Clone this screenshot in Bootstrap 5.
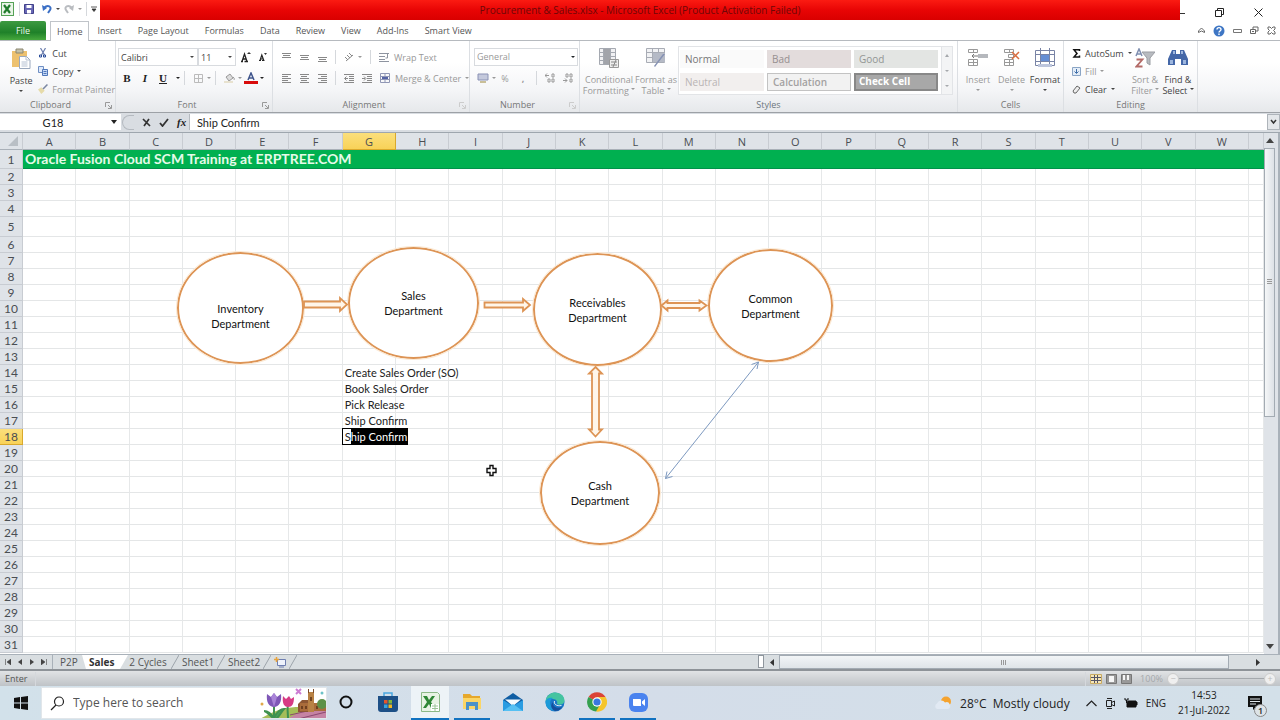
<!DOCTYPE html>
<html lang="en">
<head>
<meta charset="utf-8">
<meta name="viewport" content="width=device-width, initial-scale=1">
<title>Procurement &amp; Sales.xlsx - Microsoft Excel</title>
<link href="https://cdn.jsdelivr.net/npm/bootstrap@5.3.0/dist/css/bootstrap.min.css" rel="stylesheet">
<style>
  body { font-family: "Open Sans", "Noto Sans", sans-serif; font-size: 9px; line-height: 12px; color: #444; background: #fff; overflow-x: hidden; }
  button, input, select { font: inherit; color: inherit; }
  svg { display: block; flex: none; }
  .tool { border: 0; background: none; padding: 0; line-height: 11px; display: flex; align-items: center; justify-content: center; white-space: nowrap; }
  .dim { color: #999; }
  .caret { display: inline-block; width: 0; height: 0; border: 2px solid transparent; border-top-color: currentColor; border-bottom: 0; flex: none; }
  .vsep { width: 1px; height: 14px; background: #d5d8dc; flex: none; }

  .titlebar { height: 21px; }
  .quick { width: 100px; height: 18px; }
  .red-title { background: linear-gradient(#fb1b12, #e80505 50%, #d90000); color: #6e0707; height: 20px; line-height: 21px; font-size: 10px; }
  .win-buttons { width: 100px; gap: 30px; }
  .menu-tabs { height: 20px; border-bottom: 1px solid #b6babf; }
  .menu-tabs a { color: #555; text-decoration: none; padding: 0 8px; height: 19px; line-height: 19px; }
  .menu-tabs .file-tab { background: linear-gradient(#3d9a41, #1f8129 60%, #46a83c); color: #e9f6e9; width: 46px; text-align: center; margin-right: 4px; border-radius: 2px 2px 0 0; }
  .menu-tabs .open-tab { border: 1px solid #c0c4c9; border-bottom: 0; height: 20px; background: #fff; padding: 0 6px; }
  .menu-right { gap: 8px; }

  .ribbon { height: 72px; background: linear-gradient(#fff 30%, #f4f5f7 70%, #e6e8eb); border-bottom: 1px solid #9da1a6; }
  .group { border-right: 1px solid #dcdfe3; padding-top: 3px; flex: none; }
  .group-body { height: 54px; }
  .group-name { height: 14px; line-height: 14px; text-align: center; color: #777; position: relative; }
  .group-name.launch { padding-right: 14px; }
  .group-name svg { position: absolute; right: 3px; top: 4px; }
  .g-clip { width: 116px; } .g-font { width: 157px; } .g-align { width: 197px; } .g-num { width: 110px; }
  .g-style { width: 378px; } .g-cells { width: 106px; } .g-edit { width: 134px; }
  .g-font .group-body { padding: 4px 2px; }
  .trow { height: 24px; display: flex; align-items: center; }
  .brow { height: 18px; display: flex; align-items: center; gap: 4px; }
  .b18 { width: 18px; height: 18px; flex: none; }
  .serif-row { font-family: "Liberation Serif", serif; font-size: 11px; color: #222; }
  .big { flex-direction: column; justify-content: flex-start; padding-top: 4px; height: 54px; }
  .big svg { margin-bottom: 6px; }
  .big .short-icon { margin-bottom: 8px; }
  .combo { height: 18px; border: 1px solid #d8dbdf; background: #fff; padding: 0 2px; appearance: none; border-radius: 0; line-height: 14px; }
  .c-font { width: 80px; } .c-size { width: 38px; } .c-num { width: 104px; }
  .combo-box { position: relative; display: flex; flex: none; }
  .combo-box .caret { position: absolute; right: 4px; top: 8px; pointer-events: none; }
  .gallery { border: 1px solid #e2e4e7; height: 49px; width: 275px; margin-top: 2px; background: #fff; }
  .swatches { display: grid; grid-template-columns: 84px 84px 84px; gap: 4px 3px; padding: 3px 1px; flex: 1; }
  .swatch { border: 0; text-align: left; padding: 0 5px; font-size: 10px; line-height: 16px; color: #a3a1a1; background: #fafafa; height: 18px; }
  .s-normal { color: #777; } .s-bad { background: #e3dcdc; color: #968f90; } .s-good { background: #e3e5e3; color: #929693; }
  .s-neutral { background: #f2efee; color: #b9b4b4; } .s-calc { background: #f2f2f2; border: 1px solid #c3c3c3; font-weight: 600; line-height: 14px; }
  .s-check { background: #a8a8a8; border: 2px solid #888; color: #fff; font-weight: 700; line-height: 13px; padding-left: 3px; }
  .gal-scroll { width: 11px; background: #f3f4f5; border-left: 1px solid #e2e4e7; color: #a5a8ac; }

  .formula { height: 20px; background: #d9dde2; border-bottom: 1px solid #9ea6ae; padding-top: 1px; font-family: Lato, sans-serif; font-size: 11px; color: #222; }
  .formula input { border: 0; height: 16px; padding: 0; background: #fff; }
  .name-box { width: 106px; text-align: center; }
  .name-drop { width: 15px; height: 16px; background: #fff; }
  .name-drop .caret { border-width: 4px 3px 0; }
  .fx-tools { width: 68px; height: 16px; background: #d9dde2; }
  .fx-pill { width: 12px; height: 15px; border: 1px solid #b5bac0; border-right: 0; border-radius: 8px 0 0 8px; margin-left: 1px; }
  .formula .fx-text { padding-left: 7px; border-left: 1px solid #b5bac0; min-width: 0; }
  .fx-more { width: 13px; height: 16px; border: 1px solid #aeb4ba; background: #e4e7ea; }

  .sheet-wrap { position: relative; min-width: 0; }
  .cells { table-layout: fixed; width: 100%; border-collapse: separate; border-spacing: 0; font-family: Lato, sans-serif; font-size: 11px; line-height: 15px; color: #222; }
  .cells th, .cells td { padding: 0; height: 16px; }
  .cells td { border-right: 1px solid #e6e8e9; border-bottom: 1px solid #e4e6e7; white-space: nowrap; padding-left: 2px; overflow: visible; }
  .cells th { background: #dfe3e8; color: #4a4e53; font-weight: 400; text-align: center; border-bottom: 1px solid #c8ccd2; border-right: 1px solid #c8ccd2; font-family: "Open Sans", sans-serif; font-size: 11px; }
  .cells thead th { height: 17px; border-bottom-color: #a9b0b8; }
  .cells .rowhead { width: 23px; } .cells .edge { width: 15px; }
  .cells tbody th { font-family: Lato, sans-serif; font-size: 12px; }
  .cells th.picked { background: linear-gradient(#fbdf7c, #f8d258); border-color: #d9a92c; }
  .cells .banner td { height: 19px; background: #00b050; border-right: 0; border-bottom-color: #00924a; color: #e6fbe9; font-weight: 700; font-size: 14px; line-height: 18px; }
  .cells .tall > * { height: 20px; }
  .cells td.editing { padding-left: 0; }
  .edit-box { position: relative; height: 17px; width: max-content; margin: -1px 0 -1px -1px; border: 1px solid #000; padding-left: 2px; line-height: 15px; }
  .edit-box span { display: inline-block; height: 15px; background: #000; color: #fff; }

  .node { position: absolute; border: 2px solid #dd9455; outline: 1px solid #fbe9d4; border-radius: 50%; background: #fff; font-family: Lato, sans-serif; font-size: 11px; line-height: 15px; color: #111; text-align: center; white-space: pre-line; display: flex; align-items: center; justify-content: center; }
  .node-low { padding-top: 16px; }
  .wires { position: absolute; left: 0; top: 0; pointer-events: none; }

  .vbar { flex: 0 0 16px; background: #dfe3e8; padding-right: 3px; border-right: 2px solid #a9b1b9; }
  .bar-thumb { border: 1px solid #a3abb3; background: linear-gradient(90deg, #f5f7f8, #dde1e6); }
  .vbar .bar-thumb { flex: 269 1 0; } .vbar .rest { flex: 224 1 0; }
  .vbar .tool { height: 15px; }

  .sheet-bar { height: 17px; background: #d9dee1; border-top: 1px solid #a9b1b9; border-bottom: 2px solid #8e9398; font-size: 10px; }
  .sheet-bar .nav-btn { width: 12px; height: 14px; }
  .sheet-bar .nav-btn:first-child { margin-left: 2px; }
  .sheet-bar a { color: #555; text-decoration: none; height: 14px; line-height: 14px; }
  .sheet-bar .first-tab { border-left: 1px solid #a9b1b9; padding: 0 6px 0 7px; width: 30px; margin-left: 2px; }
  .sheet-bar .on-tab { background: #fff; font-weight: 700; color: #333; width: 46px; padding-left: 7px; clip-path: polygon(0 0, 100% 0, 38px 100%, 4px 100%); }
  .sheet-bar .w-cyc { width: 40px; } .sheet-bar .w-sh { width: 32px; }
  .slash { margin: 0 3px; }
  .split { width: 6px; height: 13px; border: 1px solid #8f969d; background: #fff; }
  .hscroll { flex: 0 0 522px; }
  .scroll-left { width: 15px; } .scroll-right { width: 51px; padding-left: 6px !important; }
  .hscroll .bar-thumb { height: 14px; flex: 1; background: linear-gradient(#f2f5f7, #dfe4e8); }

  .statusbar { height: 15px; background: linear-gradient(#e1e3e5, #bfc3c7); color: #555; padding-left: 5px; }
  .percent { color: #a5a8ab; }
  .zoom-line { width: 85px; height: 12px; appearance: none; background: linear-gradient(#a5a9ad, #a5a9ad) center/100% 1px no-repeat; margin: 0; }
  .zoom-line::-webkit-slider-thumb { appearance: none; width: 1px; height: 1px; background: #a5a9ad; }
  .round { width: 12px; height: 12px; border-radius: 50%; background: #efefef; border: 1px solid #ccc; color: #bbb; }

  .taskbar { background: linear-gradient(90deg, #d2e1ea, #d4dde9 50%, #d3e0e9); min-height: 34px; color: #222; font-size: 12px; line-height: 16px; }
  .start { width: 41px; }
  .search { width: 286px; height: 32px; background: #fff; border: 1px solid #e1e6ea; padding-left: 8px; }
  .search input { border: 0; outline: 0; background: none; width: 186px; padding: 0; }
  .search input::placeholder { color: #555; opacity: 1; }
  .task { width: 38px; height: 34px; border: 0; background: none; padding: 0; display: flex; align-items: center; justify-content: center; border-bottom: 2px solid transparent; margin-right: 4px; }
  .task.run { border-bottom-color: #1172c0; width: 36px; margin-left: 1px; }
  .task.front { background: #edf3f7; width: 38px; margin-left: 0; }
  .tray { font-size: 10px; line-height: 15px; }
  .tray .weather { font-size: 12px; }
  .clock { width: 60px; text-align: center; }
  .note { position: relative; width: 26px; height: 26px; }
  .note b { position: absolute; right: 1px; bottom: -1px; width: 13px; height: 13px; border-radius: 50%; border: 1px solid #888; background: #dde3e7; font-size: 9px; line-height: 11px; font-weight: 600; text-align: center; }
</style>
</head>
<body>
<div class="d-flex flex-column min-vh-100">

  <header>
    <div class="titlebar d-flex align-items-start">
      <div class="quick d-flex align-items-center">
        <svg width="15" height="14" viewBox="0 0 15 14"><rect x="1.500" y=".5" width="12" height="13" fill="#e9f4e7" stroke="#55a257"/><path d="M4 3l6 8M10 3l-6 8" stroke="#207b2b" stroke-width="2.200"/></svg>
        <span class="vsep ms-1 me-1"></span>
        <button class="tool" aria-label="Save"><svg width="10" height="10" viewBox="0 0 10 10"><path d="M.5.5h9v9h-9z" fill="#6968b5" stroke="#41418b"/><path d="M2.500 1h5v3h-5zM3 6h4v3.500H3z" fill="#fff"/></svg></button>
        <button class="tool ms-2" aria-label="Undo"><svg width="10" height="10" viewBox="0 0 10 10"><path d="M2 4c4-4 8-1 6 2L6 9" fill="none" stroke="#3b6fc5" stroke-width="2"/><path d="M0 1l1 6 4-3z" fill="#3b6fc5"/></svg></button>
        <button class="tool ms-1" aria-label="Undo list"><i class="caret"></i></button>
        <button class="tool ms-1 dim" aria-label="Redo"><svg width="10" height="10" viewBox="0 0 10 10"><path d="M8 4C4 0 0 3 2 6l2 3" fill="none" stroke="#b9bcc0" stroke-width="2"/><path d="M10 1L9 7 5 4z" fill="#b9bcc0"/></svg></button>
        <button class="tool ms-1 dim" aria-label="Redo list"><i class="caret"></i></button>
        <span class="vsep ms-1"></span>
        <button class="tool ms-1" aria-label="Customize"><svg width="6" height="6" viewBox="0 0 6 6"><path d="M0 1h6M1 3h4L3 5.500z" stroke="#333" fill="#333" stroke-width=".8"/></svg></button>
      </div>
      <div class="red-title flex-grow-1 text-center">Procurement &amp; Sales.xlsx - Microsoft Excel (Product Activation Failed)</div>
      <div class="win-buttons d-flex align-items-center h-100 pe-3 pt-1">
        <button class="tool" aria-label="Minimize"><svg width="5" height="10"><path d="M0 5.500h5" stroke="#333"/></svg></button>
        <button class="tool" aria-label="Restore"><svg width="9" height="9" viewBox="0 0 9 9"><path d="M.5 2.500h6v6h-6zM2.500 2V.5h6v6H7" fill="none" stroke="#222"/></svg></button>
        <button class="tool" aria-label="Close"><svg width="9" height="9" viewBox="0 0 9 9"><path d="M.5.5l8 8M8.500.5l-8 8" stroke="#222"/></svg></button>
      </div>
    </div>

    <nav class="menu-tabs d-flex">
      <a href="#" class="file-tab">File</a><a href="#" class="open-tab">Home</a><a href="#">Insert</a><a href="#">Page Layout</a><a href="#">Formulas</a><a href="#">Data</a><a href="#">Review</a><a href="#">View</a><a href="#">Add-Ins</a><a href="#">Smart View</a>
      <div class="menu-right ms-auto d-flex align-items-center pe-1">
        <button class="tool" aria-label="Collapse ribbon"><svg width="7" height="7" viewBox="0 0 7 7"><path d="M.5 4L3.500 1l3 3v1.500L3.500 4 .5 5.500z" fill="none" stroke="#666"/></svg></button>
        <button class="tool" aria-label="Help"><svg width="12" height="12" viewBox="0 0 12 12"><circle cx="6" cy="6" r="5.500" fill="#3e76c4"/><path d="M4 4.500c0-2.500 4-2.500 4 0C8 6 6 6 6 7.500M6 8.500V10" stroke="#fff" fill="none" stroke-width="1.400"/></svg></button>
        <button class="tool" aria-label="Minimize workbook"><svg width="9" height="9"><path d="M.5 3.500h8v3h-8z" fill="none" stroke="#777"/></svg></button>
        <button class="tool" aria-label="Restore workbook"><svg width="9" height="9" viewBox="0 0 9 9"><path d="M.5 3.500h5v4h-5zM3 3V1h5v4H6M2 5.500h2" fill="none" stroke="#666"/></svg></button>
        <button class="tool" aria-label="Close workbook"><svg width="9" height="9" viewBox="0 0 9 9"><path d="M1 1h2l1.500 1.500L6 1h2v2L6.500 4.500 8 6v2H6L4.500 6.500 3 8H1V6l1.500-1.500L1 3z" fill="none" stroke="#666"/></svg></button>
      </div>
    </nav>

    <div class="ribbon d-flex">
      <section class="group g-clip">
        <div class="group-body d-flex">
          <button class="tool big ps-1 col-4"><svg width="20" height="21" viewBox="0 0 20 21"><path d="M1 3h15v16H1z" fill="#edc16f"/><path d="M5 1h7v4H5z" fill="#c5c1a8" stroke="#8b8770"/><path d="M8.500 8.500h7l3.500 3.500v8.500H8.500z" fill="#fff" stroke="#9aa8bd"/><path d="M15 8.500V12h4M10.500 14h6M10.500 16h6M10.500 18h6" fill="none" stroke="#b5c1d2"/></svg>Paste<i class="caret mt-1"></i></button>
          <div>
            <button class="tool brow"><svg width="10" height="10" viewBox="0 0 9 10"><path d="M2 0l4 7M7 0L3 7" stroke="#6c7eae" stroke-width="1.200"/><path d="M1 7h2v2H1zM5 7h2v2H5z" fill="none" stroke="#2a4c9a"/></svg>Cut</button>
            <button class="tool brow"><svg width="10" height="10" viewBox="0 0 10 10"><path d="M.5.5h5v6h-5z" fill="#dfeafb" stroke="#6f8fc4"/><path d="M4.500 3.500h5v6h-5z" fill="#c7daf7" stroke="#4f76b8"/><path d="M5.500 5.500h3M5.500 7.500h3" stroke="#4f76b8"/></svg>Copy<i class="caret"></i></button>
            <button class="tool brow dim"><svg width="10" height="10" viewBox="0 0 9 9"><path d="M0 5l3-2 3 3-3 3z" fill="#e6dba9"/><path d="M4 4l4-4 1 1-4 4z" fill="#7b87a2"/></svg>Format Painter</button>
          </div>
        </div>
        <div class="group-name launch">Clipboard<svg width="7" height="7"><path d="M.5 5V.5H5M3 3l3 3M6.500 3v3.500H3" stroke="#999" fill="none"/></svg></div>
      </section>

      <section class="group g-font">
        <div class="group-body">
          <div class="d-flex align-items-center">
            <label class="combo-box"><input class="combo c-font" value="Calibri" aria-label="Font"><i class="caret"></i></label>
            <label class="combo-box"><input class="combo c-size" value="11" aria-label="Font size"><i class="caret"></i></label>
            <button class="tool b18" aria-label="Grow font"><svg width="11" height="12" viewBox="0 0 11 12"><path d="M1 10.500h2M4.500 10.500H8M2 10.500L4.500 3 7 10.500M3 8h3" fill="none" stroke="#222" stroke-width="1.300"/><path d="M7 3l2-2 2 2z" fill="#333"/></svg></button>
            <button class="tool b18" aria-label="Shrink font"><svg width="10" height="10" viewBox="0 0 10 10"><path d="M1 8.500h2M4 8.500h2.500M2 8.500L3.800 3l2 5.500M2.600 7h2.400" fill="none" stroke="#222" stroke-width="1.200"/><path d="M6 1h3L7.500 3z" fill="#333"/></svg></button>
          </div>
          <div class="trow serif-row">
            <button class="tool b18 fw-bold">B</button><button class="tool b18 fst-italic fw-bold">I</button><button class="tool b18 fw-bold text-decoration-underline">U</button>
            <button class="tool ms-1" aria-label="Underline list"><i class="caret"></i></button><span class="vsep mx-1"></span>
            <button class="tool b18" aria-label="Borders"><svg width="9" height="9"><path d="M.5.5h8v8h-8zM4.500 0v9M0 4.500h9" stroke="#bbb" fill="none"/></svg></button><button class="tool dim" aria-label="Border list"><i class="caret"></i></button><span class="vsep mx-1"></span>
            <button class="tool b18" aria-label="Fill color"><svg width="11" height="10" viewBox="0 0 11 10"><path d="M2 4l4-3 3 4-4 3z" fill="#ddd" stroke="#999"/><path d="M9 4c2 1 1 3 1 3" stroke="#999" fill="none"/><path d="M0 9h9" stroke="#e8e2cf" stroke-width="2"/></svg></button><button class="tool dim" aria-label="Fill list"><i class="caret"></i></button>
            <button class="tool b18" aria-label="Font color"><svg width="14" height="12" viewBox="0 0 14 12"><path d="M4 8l3-7 3 7M5 6h4" fill="none" stroke="#3f558c" stroke-width="1.500"/><path d="M0 9h14v3H0z" fill="#d80b0b"/></svg></button><button class="tool" aria-label="Font color list"><i class="caret"></i></button>
          </div>
        </div>
        <div class="group-name launch">Font<svg width="7" height="7"><path d="M.5 5V.5H5M3 3l3 3M6.500 3v3.500H3" stroke="#999" fill="none"/></svg></div>
      </section>

      <section class="group g-align dim">
        <div class="group-body pt-1 ps-1">
          <div class="d-flex align-items-center">
            <button class="tool b18" aria-label="Top align"><svg width="9" height="9"><path d="M0 .5h9M1 2.500h7M0 4.500h9" stroke="#888"/></svg></button>
            <button class="tool b18" aria-label="Middle align"><svg width="9" height="9"><path d="M0 2.500h9M1 4.500h7M0 6.500h9" stroke="#888"/></svg></button>
            <button class="tool b18" aria-label="Bottom align"><svg width="9" height="9"><path d="M0 4.500h9M1 6.500h7M0 8.500h9" stroke="#888"/></svg></button>
            <span class="vsep mx-1"></span>
            <button class="tool b18" aria-label="Orientation"><svg width="10" height="10"><path d="M1 5l3 3M3 3l3 3M5 1l3 3M2 9l7-6" stroke="#888"/></svg></button><i class="caret"></i>
            <span class="vsep mx-2"></span>
            <button class="tool gap-1"><svg width="11" height="10"><path d="M0 1.500h10M0 4.500h6M0 7.500h6M8.500 2v4h-2M0 9.500h10" stroke="#8e94a0" fill="none"/></svg>Wrap Text</button>
          </div>
          <div class="trow">
            <button class="tool b18" aria-label="Align left"><svg width="9" height="9"><path d="M0 .5h9M0 2.500h6M0 4.500h9M0 6.500h6M0 8.500h9" stroke="#888"/></svg></button>
            <button class="tool b18" aria-label="Center"><svg width="9" height="9"><path d="M0 .5h9M1 2.500h6M0 4.500h9M1 6.500h6M0 8.500h9" stroke="#888"/></svg></button>
            <button class="tool b18" aria-label="Align right"><svg width="9" height="9"><path d="M0 .5h9M3 2.500h6M0 4.500h9M3 6.500h6M0 8.500h9" stroke="#888"/></svg></button>
            <span class="vsep mx-1"></span>
            <button class="tool b18" aria-label="Decrease indent"><svg width="10" height="9"><path d="M0 .5h10M5 2.500h5M5 4.500h5M5 6.500h5M0 8.500h10M4 4.500H1M2.500 2.500l-2 2 2 2" stroke="#888" fill="none"/></svg></button>
            <button class="tool b18" aria-label="Increase indent"><svg width="10" height="9"><path d="M0 .5h10M5 2.500h5M5 4.500h5M5 6.500h5M0 8.500h10M0 4.500h3M2 2.500l2 2-2 2" stroke="#888" fill="none"/></svg></button>
            <button class="tool gap-1 ms-1"><svg width="11" height="10"><path d="M.5.5h9v9h-9zM0 3.500h10M0 6.500h10M5 0v3M5 7v3" stroke="#9097b5" fill="none"/><path d="M2 5h6" stroke="#5563a5" stroke-width="2"/></svg>Merge &amp; Center<i class="caret"></i></button>
          </div>
        </div>
        <div class="group-name launch">Alignment<svg width="7" height="7"><path d="M.5 5V.5H5M3 3l3 3M6.500 3v3.500H3" stroke="#ccc" fill="none"/></svg></div>
      </section>

      <section class="group g-num dim">
        <div class="group-body pt-1 ps-1">
          <label class="combo-box"><select class="combo c-num dim" aria-label="Number format"><option>General</option></select><i class="caret text-dark"></i></label>
          <div class="trow">
            <button class="tool b18" aria-label="Accounting"><svg width="12" height="11"><path d="M1 1h10v6H1z" fill="#c4c9dc" stroke="#8a92b5"/><path d="M3 9h6" stroke="#c9bf98" stroke-width="2"/></svg></button><i class="caret"></i>
            <button class="tool b18">%</button><button class="tool b18 fw-bold">,</button><span class="vsep mx-1"></span>
            <button class="tool b18" aria-label="Increase decimal"><svg width="11" height="10"><path d="M0 2.500h4M2 .5l-2 2 2 2M7 1h2v3H7zM3 6h2v3H3zM7 6h2v3H7z" stroke="#999" fill="none"/></svg></button>
            <button class="tool b18" aria-label="Decrease decimal"><svg width="11" height="10"><path d="M3 1h2v3H3zM7 1h2v3H7zM7 6h2v3H7zM0 7.500h4M2 5.500l2 2-2 2" stroke="#999" fill="none"/></svg></button>
          </div>
        </div>
        <div class="group-name launch">Number<svg width="7" height="7"><path d="M.5 5V.5H5M3 3l3 3M6.500 3v3.500H3" stroke="#ccc" fill="none"/></svg></div>
      </section>

      <section class="group g-style dim">
        <div class="group-body d-flex ps-1">
          <button class="tool big" style="width:50px"><svg width="20" height="20" viewBox="0 0 20 20"><path d="M.5.5h16v16H.5zM0 4.500h17M0 8.500h17M0 12.500h17M4.500 0v17M11.500 0v17" fill="#f1f1f3" stroke="#a5a9b1"/><path d="M5 1h6v15H5z" fill="#a2a4aa"/><path d="M10.500 11.500h9v8h-9z" fill="#eee" stroke="#999"/><path d="M12 14h6M12 17h6M14 19l3-7" stroke="#888"/></svg><span>Conditional<br>Formatting <i class="caret mb-1"></i></span></button>
          <button class="tool big" style="width:44px"><svg width="20" height="20" viewBox="0 0 20 20"><path d="M.5.5h18v14H.5zM0 4.500h18M0 9.500h18M6.500 0v15M12.500 0v15" fill="#f1f2f4" stroke="#a8acb5"/><path d="M7 5h12v9H7z" fill="#b5bac6"/><path d="M19 6l-7 9-3 4-1-1 9-12z" fill="#8591b3"/></svg><span>Format as<br>Table <i class="caret mb-1"></i></span></button>
          <div class="gallery d-flex">
            <div class="swatches">
              <button class="swatch s-normal">Normal</button><button class="swatch s-bad">Bad</button><button class="swatch s-good">Good</button>
              <button class="swatch s-neutral">Neutral</button><button class="swatch s-calc">Calculation</button><button class="swatch s-check">Check Cell</button>
            </div>
            <div class="gal-scroll d-flex flex-column align-items-center justify-content-around"><svg width="4" height="3"><path d="M0 3h4L2 0z" fill="#a5a8ac"/></svg><i class="caret"></i><i class="caret"></i></div>
          </div>
        </div>
        <div class="group-name text-secondary">Styles</div>
      </section>

      <section class="group g-cells">
        <div class="group-body d-flex ps-1">
          <button class="tool big dim" style="width:32px"><svg width="20" height="20" viewBox="0 0 20 20"><path d="M.5 1.500h9v3h-9zM.5 11.500h9v6h-9zM0 14.500h9M5.500 2v3M5.500 12v5" fill="#fff" stroke="#999"/><path d="M10 6h10v4H10z" fill="#b5b8bd"/><path d="M4 8h6M6 6L4 8l2 2" fill="none" stroke="#777"/></svg>Insert<i class="caret mt-1"></i></button>
          <button class="tool big dim" style="width:35px"><svg width="20" height="20" viewBox="0 0 20 20"><path d="M2.500 1.500h9v3h-9zM6.500 6.500h5v3h-5zM2.500 11.500h9v6h-9zM2 14.500h9M7.500 2v3M7.500 12v5" fill="#fff" stroke="#999"/><path d="M10 4l7 7M17 4l-7 7" stroke="#d96c3f" stroke-width="1.500"/></svg>Delete<i class="caret mt-1"></i></button>
          <button class="tool big" style="width:32px"><svg width="21" height="20" viewBox="0 0 21 20"><path d="M.5 2.500h19v15H.5zM0 6.500h20M0 13.500h20M5.500 0v18M14.500 0v18" fill="#fff" stroke="#7883a5"/><path d="M6 7h8v6H6z" fill="#658ed4"/><path d="M3 16h14v3H3z" fill="#bcc5dc"/></svg>Format<i class="caret mt-1"></i></button>
        </div>
        <div class="group-name">Cells</div>
      </section>

      <section class="group g-edit">
        <div class="group-body d-flex ps-2">
          <div style="width:57px">
            <button class="tool brow"><svg width="9" height="9"><path d="M7.500 2V.8H2L5 4.500 2 8H7.500V6.500" stroke="#111" stroke-width="1.500" fill="none"/></svg>AutoSum<i class="caret"></i></button>
            <button class="tool brow dim"><svg width="9" height="9"><path d="M.5.5h8v8h-8z" fill="#e4edf7" stroke="#8aa5c5"/><path d="M4.500 2v4M2.500 4.500l2 2 2-2" stroke="#3f6ea8" fill="none"/></svg>Fill<i class="caret"></i></button>
            <button class="tool brow"><svg width="9" height="9"><path d="M1 6l4-5 3 2-4 5H2z" fill="#eee" stroke="#666"/></svg>Clear<i class="caret"></i></button>
          </div>
          <button class="tool big dim" style="width:32px"><svg width="20" height="20" viewBox="0 0 20 20"><path d="M1 8l3-7 3 7M2 6h4" fill="none" stroke="#7e8eb0" stroke-width="1.500"/><path d="M1.500 11.500h6l-6 7h6" fill="none" stroke="#b36a67" stroke-width="1.800"/><path d="M7 4h13l-5 6v7l-3-2v-5z" fill="#b8bbc0" stroke="#9a9da3"/></svg><span>Sort &amp;<br>Filter <i class="caret mb-1"></i></span></button>
          <button class="tool big" style="width:34px"><svg class="short-icon" width="20" height="18" viewBox="0 0 20 18"><path d="M4 2h4v4h4V2h4l4 9v6h-7v-6H7v6H0v-6z" fill="#4467a8"/><path d="M2 12h3v4H2zM15 12h3v4h-3zM5 3h2v3H5zM13 3h2v3h-2z" fill="#9db6de"/></svg><span>Find &amp;<br>Select <i class="caret mb-1"></i></span></button>
        </div>
        <div class="group-name">Editing</div>
      </section>
    </div>

    <div class="formula d-flex">
      <input class="name-box" value="G18" aria-label="Name box">
      <button class="tool name-drop" aria-label="Names"><i class="caret"></i></button>
      <div class="fx-tools d-flex align-items-center">
        <span class="fx-pill"></span>
        <button class="tool ms-2" aria-label="Cancel"><svg width="9" height="9"><path d="M1 1l7 7M7 1L2 8" stroke="#333" stroke-width="1.700"/></svg></button>
        <button class="tool ms-2" aria-label="Enter"><svg width="10" height="9"><path d="M1 5l2.500 3L9 1" fill="none" stroke="#333" stroke-width="1.800"/></svg></button>
        <button class="tool serif-row ms-2 fst-italic fw-bold">fx</button>
      </div>
      <input class="fx-text flex-grow-1" value="Ship Confirm" aria-label="Formula">
      <button class="tool fx-more" aria-label="Expand formula bar"><svg width="7" height="6"><path d="M1 1l2.500 3L6 1" fill="none" stroke="#333" stroke-width="1.500"/></svg></button>
    </div>
  </header>

  <main class="d-flex flex-grow-1">
    <div class="sheet-wrap flex-grow-1" id="sheet">
      <table class="cells"><thead id="head"></thead><tbody id="rows"></tbody></table>
      <svg class="wires" width="1264" height="522" viewBox="0 133 1264 522">
        <g fill="#fff6ea" stroke="#dd9455" stroke-width="1.800">
          <path d="M304 301.500h36V298l7 6.500-7 6.500v-3.500h-36z"/>
          <path d="M484.500 302.500h38.500V299l7 6-7 6v-3.500h-38.500z"/>
          <path d="M661.500 305.500l6-5v2.500h32v-2.500l7 5-7 5V308h-32v2.500z"/>
          <path d="M595.500 367l6.500 6.500h-3v56h3l-6.500 7-6.500-7h3v-56h-3z"/>
        </g>
        <path d="M758.500 362L665.500 478.500M758.500 362l-1.500 7M758.500 362l-7 2.500M665.500 478.500l1.500-7M665.500 478.500l7-2" stroke="#7d99c0" fill="none"/>
        <path d="M490 465.500h3v3h3v4h-3v3h-3v-3h-3v-4h3z" fill="#fff" stroke="#111" stroke-width="1.400"/>
      </svg>
    </div>
    <div class="vbar d-flex flex-column">
      <button class="tool" aria-label="Scroll up"><svg width="8" height="5"><path d="M0 5h8L4 0z" fill="#444"/></svg></button>
      <div class="bar-thumb d-flex align-items-center justify-content-center"><svg width="5" height="6"><path d="M0 .5h5M0 2.500h5M0 4.500h5" stroke="#999"/></svg></div>
      <div class="rest"></div>
      <button class="tool" aria-label="Scroll down"><svg width="8" height="5"><path d="M0 0h8L4 5z" fill="#444"/></svg></button>
    </div>
  </main>

  <footer>
    <div class="sheet-bar d-flex">
      <button class="tool nav-btn" aria-label="First sheet"><svg width="6" height="6"><path d="M.5 0v6M6 0v6L2 3z" fill="#444" stroke="#444" stroke-width=".6"/></svg></button>
      <button class="tool nav-btn" aria-label="Previous sheet"><svg width="4" height="6"><path d="M4 0v6L0 3z" fill="#444"/></svg></button>
      <button class="tool nav-btn" aria-label="Next sheet"><svg width="4" height="6"><path d="M0 0v6l4-3z" fill="#444"/></svg></button>
      <button class="tool nav-btn" aria-label="Last sheet"><svg width="6" height="6"><path d="M5.500 0v6M0 0v6l4-3z" fill="#444" stroke="#444" stroke-width=".6"/></svg></button>
      <a href="#" class="first-tab">P2P</a>
      <a href="#" class="on-tab">Sales</a>
      <a href="#" class="w-cyc text-center">2 Cycles</a><svg class="slash" width="8" height="14"><path d="M0 14L8 0" stroke="#9da4ab"/></svg>
      <a href="#" class="w-sh text-center">Sheet1</a><svg class="slash" width="8" height="14"><path d="M0 14L8 0" stroke="#9da4ab"/></svg>
      <a href="#" class="w-sh text-center">Sheet2</a><svg class="slash" width="8" height="14"><path d="M0 14L8 0" stroke="#9da4ab"/></svg>
      <button class="tool" aria-label="Insert sheet"><svg width="12" height="11"><path d="M3.500 2.500h8v6h-8z" fill="#eef2fb" stroke="#6f7fb0"/><path d="M5 10h5" stroke="#6f7fb0"/><path d="M2.500 0v5M0 2.500h5" stroke="#e8a33c" stroke-width="1.500"/></svg></button><svg class="slash" width="8" height="14"><path d="M0 14L8 0" stroke="#9da4ab"/></svg>
      <div class="hscroll d-flex ms-auto">
        <span class="split"></span>
        <button class="tool scroll-left" aria-label="Scroll left"><svg width="4" height="7"><path d="M4 0v7L0 3.500z" fill="#333"/></svg></button>
        <div class="bar-thumb d-flex align-items-center justify-content-center"><svg width="6" height="5"><path d="M.5 0v5M2.500 0v5M4.500 0v5" stroke="#999"/></svg></div>
        <button class="tool scroll-right" aria-label="Scroll right"><svg width="4" height="7"><path d="M0 0v7l4-3.500z" fill="#333"/></svg></button>
      </div>
    </div>

    <div class="statusbar d-flex align-items-center">
      <span>Enter</span><span class="vsep ms-2"></span>
      <div class="ms-auto me-1 d-flex align-items-center">
        <span class="vsep me-1"></span>
        <button class="tool me-1" aria-label="Normal view"><svg width="12" height="10"><path d="M.5.5h11v9H.5z" fill="#f6e6b8" stroke="#c9ab62"/><path d="M1 3.500h10M1 6.500h10M4.500 1v8M7.500 1v8" stroke="#556"/></svg></button>
        <button class="tool me-1" aria-label="Page layout view"><svg width="11" height="10"><path d="M.5.5h10v9H.5z" fill="#999" stroke="#777"/><path d="M3 2h5v6H3z" fill="#f6f6f6"/></svg></button>
        <button class="tool me-2" aria-label="Page break view"><svg width="11" height="10"><path d="M.5.5h10v9H.5z" fill="#999" stroke="#777"/><path d="M2 1h2v5H2zM6 1h2v5H6z" fill="#f6f6f6"/></svg></button>
        <span class="percent me-1">100%</span>
        <button class="tool round" aria-label="Zoom out">−</button>
        <input type="range" class="zoom-line" aria-label="Zoom">
        <button class="tool round" aria-label="Zoom in">+</button>
      </div>
    </div>

    <div class="taskbar d-flex align-items-center">
      <button class="tool start" aria-label="Start"><svg width="14" height="14" viewBox="0 0 14 14"><path d="M0 2l6-1v5.500H0zM7 1l7-1v6.500H7zM0 7.500h6V13l-6-1zM7 7.500h7V14l-7-1z" fill="#111"/></svg></button>
      <label class="search d-flex align-items-center overflow-hidden">
        <svg width="15" height="15" viewBox="0 0 15 15"><circle cx="9" cy="5.500" r="4.500" fill="none" stroke="#222" stroke-width="1.200"/><path d="M6 9l-5 5" stroke="#222" stroke-width="1.300"/></svg>
        <input class="ms-2" type="text" placeholder="Type here to search">
        <svg class="ms-auto" width="66" height="32" viewBox="0 0 66 32"><path d="M0 32c16-10 28-12 40-12h26v12z" fill="#a5bd58"/><path d="M28 32c10-8 24-10 38-9v9z" fill="#c583a4"/><path d="M38 32l28-7M30 28l26-6" stroke="#8b4970"/><path d="M38 17l4-4h7v12H38z" fill="#8d5632"/><path d="M40 16h26v8H40z" fill="#a96c3b"/><path d="M48 5h6v20h-6z" fill="#b88245"/><path d="M48.500 6V2M53.500 6V2" stroke="#7b4a2c"/><path d="M42 19v3M46 19v3M51 10v4M57 19v3" stroke="#5b3218" stroke-width="1.500"/><circle cx="62" cy="17" r="5" fill="#5d9147"/><path d="M14 32V18M14 32C6 24 5 24 4 24c3 0 7 2 10 8 2-8 8-10 10-10-3 3-5 8-8 10M28 32c0-7-1-10 0-14" stroke="#3f9150" stroke-width="2" fill="#4ba35a"/><path d="M7 7l4 3 3-4 3 4 4-3c1 8-2 13-7 13S6 15 7 7z" fill="#7f58b7"/><path d="M11 10l3-4 3 4-3 10z" fill="#a984d8"/><path d="M23 9l3 3 3-3 2 3 3-2c0 7-2 10-6 10s-6-4-5-11z" fill="#d63b84"/><path d="M36 2l5 5M41 2l-5 5" stroke="#cc7cd3" stroke-width="2"/><circle cx="2" cy="17" r="1.500" fill="#e1a94a"/><circle cx="62" cy="6" r="1.500" fill="#6cc2c8"/></svg>
      </label>
      <button class="task" aria-label="Cortana"><svg width="14" height="14"><circle cx="7" cy="7" r="5.500" fill="none" stroke="#111" stroke-width="2"/></svg></button>
      <button class="task" aria-label="Store"><svg width="20" height="20" viewBox="0 0 20 20"><path d="M6 4V1h8v3" fill="none" stroke="#49a6df" stroke-width="1.500"/><path d="M0 4h20v13q0 3-3 3H3q-3 0-3-3z" fill="#1d4f86"/><path d="M6 8h3.500v3.500H6z" fill="#e5562c"/><path d="M10.500 8H14v3.500h-3.500z" fill="#82b73a"/><path d="M6 12.500h3.500V16H6z" fill="#34a4e0"/><path d="M10.500 12.500H14V16h-3.500z" fill="#f3b822"/></svg></button>
      <button class="task run front" aria-label="Excel"><svg width="20" height="20" viewBox="0 0 20 20"><path d="M1.500.5h16l2 2v17h-18z" fill="#e8f3e4" stroke="#8cb887"/><path d="M3 4h4l2 4 3-4h3l-4 6 4 6h-4l-2-4-3 4H3l4-6z" fill="#2f8735"/><path d="M11 12h8v7h-8z" fill="#fff"/><path d="M12 14h6M12 16.500h6M15 12v7" stroke="#9bc496"/></svg></button>
      <button class="task run" aria-label="File Explorer"><svg width="20" height="18" viewBox="0 0 20 18"><path d="M1 1h7l2 2h8v13H1z" fill="#e6a82c"/><path d="M1 5h18v11H1z" fill="#fbd667"/><path d="M4 9h12v8h-3v-4H7v4H4z" fill="#4b92c9"/></svg></button>
      <button class="task" aria-label="Mail"><svg width="20" height="20" viewBox="0 0 20 20"><path d="M0 8l10-7 10 7v11H0z" fill="#0f5da3"/><path d="M2 7.500h16L10 14z" fill="#f5fafd"/><path d="M0 8l10 6 10-6v11H0z" fill="#2a9ce2"/><path d="M0 19l10-7 10 7z" fill="#56c0f3"/></svg></button>
      <button class="task" aria-label="Edge"><svg width="20" height="20" viewBox="0 0 20 20"><circle cx="10" cy="10" r="9.500" fill="#1a76c7"/><path d="M.5 10C1 3 6 .5 10 .5c6 0 9.500 4 9.500 8 0 4-5 5-7.500 3.500 1-2-.5-5-4-5S1 8 .5 10z" fill="#45c4a0"/><path d="M.6 9C2 6 5 5 8 6c-5 3-3 10 3 12-5 2-11-2-10.400-9z" fill="#1b9ad8"/><path d="M8 10c-1 5 5 7 9 5-2 3-4 4-7 4-4-2-5-6-2-9z" fill="#174f9c"/><path d="M9.500 9c-1 3 2 5.500 7 4.500" fill="none" stroke="#e3edf5"/></svg></button>
      <button class="task run" aria-label="Chrome"><svg width="20" height="20" viewBox="0 0 20 20"><path d="M10 10L1.500 5a10 10 0 0 1 17 0z" fill="#db4437"/><path d="M10 10V5h8.500A9.500 9.500 0 0 1 9 19.500z" fill="#f5c52c"/><path d="M10 5h8.500L10 10z" fill="#f5c52c"/><path d="M10 10l3 2.500L9 19.500A9.500 9.500 0 0 1 1.500 5z" fill="#34a04f"/><circle cx="10" cy="10" r="4.700" fill="#fff"/><circle cx="10" cy="10" r="3.600" fill="#3a77e0"/></svg></button>
      <button class="task run" aria-label="Zoom"><svg width="19" height="19" viewBox="0 0 19 19"><rect width="19" height="19" rx="6" fill="#4a83ef"/><path d="M4 6h7q1 0 1 1v6H5q-1 0-1-1zM13 8.500L16 6v7l-3-2.500z" fill="#fff"/></svg></button>

      <div class="tray d-flex align-items-center ms-auto">
        <svg width="18" height="14" viewBox="0 0 18 14"><circle cx="12" cy="5.500" r="5" fill="#f5a32f"/><path d="M3 13a3 3 0 0 1 0-5.500 4.500 4.500 0 0 1 8-1 3.500 3.500 0 0 1 3 6.500z" fill="#e1e9f3"/></svg>
        <span class="weather ms-2 text-nowrap">28°C&nbsp; Mostly cloudy</span>
        <button class="tool ms-3" aria-label="Hidden icons"><svg width="11" height="7"><path d="M.5 6l5-5 5 5" fill="none" stroke="#222" stroke-width="1.200"/></svg></button>
        <svg class="ms-2" width="11" height="13" viewBox="0 0 11 13"><path d="M1.500 3.500h5v6h-5zM6.500 5.500l3-1.500v5l-3-1.500M2 1.500h5M2 11.500h5" fill="none" stroke="#222"/></svg>
        <svg class="ms-2" width="14" height="10" viewBox="0 0 14 10"><path d="M4 3h8v1h1v3h-1v2H3V5z" fill="#111" stroke="#111"/><path d="M1 0v2h3V0M2.500 2v3" stroke="#111" fill="none"/></svg>
        <span class="ms-2">ENG</span>
        <div class="clock ms-2"><div>14:53</div><div>21-Jul-2022</div></div>
        <button class="tool note ms-2 me-2" aria-label="Notifications"><svg width="14" height="14" viewBox="0 0 14 14"><path d="M0 0h14v11H8l-3 3v-3H0z" fill="#111"/><path d="M2 3h10M2 5.500h10M2 8h6" stroke="#dfe6ea"/></svg><b>1</b></button>
        <span class="ms-1"></span>
      </div>
    </div>
  </footer>
</div>

<script>
  const letters = 'ABCDEFGHIJKLMNOPQRSTUVW'.split('');
  const notes = { 14: 'Create Sales Order (SO)', 15: 'Book Sales Order', 16: 'Pick Release', 17: 'Ship Confirm' };

  // column headings
  document.getElementById('head').innerHTML = '<tr><th class="rowhead" aria-label="Select all"><svg class="ms-auto me-1" width="10" height="10"><path d="M10 0v10H0z" fill="#b9bfc5"/></svg></th>' +
    letters.map(l => `<th${l === 'G' ? ' class="picked"' : ''}>${l}</th>`).join('') + '<th class="edge"></th></tr>';

  // sheet rows
  let html = '';
  for (let r = 1; r <= 31; r++) {
    html += `<tr${r === 1 ? ' class="banner"' : r === 5 ? ' class="tall"' : ''}><th${r === 18 ? ' class="picked"' : ''}>${r}</th>`;
    if (r === 1) { html += '<td colspan="24">Oracle Fusion Cloud SCM Training at ERPTREE.COM</td></tr>'; continue; }
    for (let c = 0; c < 24; c++) {
      if (c === 6 && r === 18) html += '<td class="editing"><div class="edit-box">S<span>hip Confirm</span></div></td>';
      else html += `<td>${c === 6 && notes[r] ? notes[r] : ''}</td>`;
    }
    html += '</tr>';
  }
  document.getElementById('rows').innerHTML = html;

  // department nodes on the drawing layer: left, top, width, height
  const nodes = [
    ['Inventory', 177, 119, 127, 112, 'node-low'],
    ['Sales', 348, 114, 131, 112, ''],
    ['Receivables', 533, 120, 129, 113, ''],
    ['Common', 708, 116, 125, 113, ''],
    ['Cash', 540, 308, 120, 104, '']
  ];
  const sheet = document.getElementById('sheet');
  for (const [name, x, y, w, h, extra] of nodes) {
    const d = document.createElement('div');
    d.className = 'node ' + extra;
    d.style.cssText = `left:${x}px;top:${y}px;width:${w}px;height:${h}px`;
    d.textContent = name + '\nDepartment';
    sheet.insertBefore(d, sheet.querySelector('.wires'));
  }
</script>
<script src="https://cdn.jsdelivr.net/npm/bootstrap@5.3.0/dist/js/bootstrap.bundle.min.js"></script>
</body>
</html>
